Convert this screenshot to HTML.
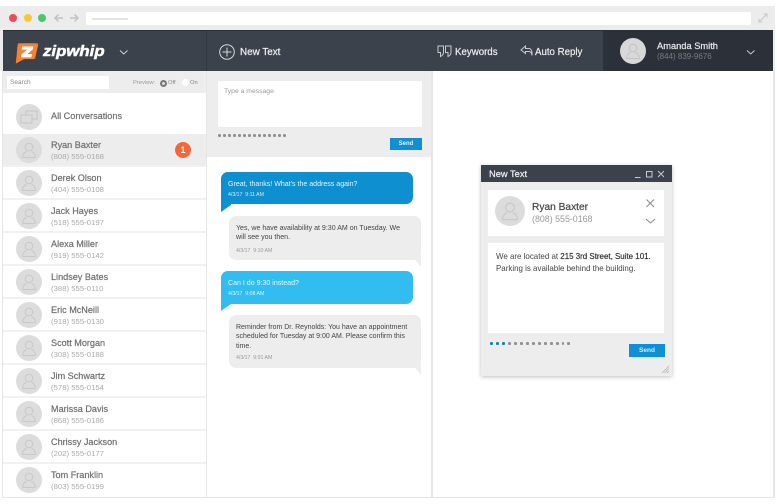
<!DOCTYPE html>
<html><head><meta charset="utf-8"><style>
html,body{margin:0;padding:0;background:#fff}
body{width:777px;height:504px;position:relative;overflow:hidden;font-family:"Liberation Sans",sans-serif;color:#666}
.a{position:absolute}
.t{position:absolute;white-space:nowrap}
.row{position:absolute;left:3px;width:203px;height:31px;background:#fff;border-bottom:2px solid #f1f1f1}
.av{position:absolute;left:13px;top:3px;width:26px;height:26px}
.n{position:absolute;left:48px;top:6px;font-size:9.100px;color:#6e6e6e;white-space:nowrap;-webkit-text-stroke:.2px #6e6e6e}
.p{position:absolute;left:48px;top:18px;font-size:7.750px;color:#aaa;white-space:nowrap}
.d{position:absolute;width:2.500px;height:2.500px;border-radius:50%;background:#8f8f8f}
.b{position:absolute;border-radius:7px}
</style></head><body>
<div class="a" style="left:0;top:6px;width:775px;height:65px;background:#ececec"></div>
<div class="a" style="left:2px;top:71px;width:773px;height:427px;background:#e6e6e6"></div>
<div class="a" style="left:9px;top:14px;width:8px;height:8px;border-radius:50%;background:#ee4a58"></div>
<div class="a" style="left:24px;top:14px;width:8px;height:8px;border-radius:50%;background:#f7c93a"></div>
<div class="a" style="left:38px;top:14px;width:8px;height:8px;border-radius:50%;background:#4cc66a"></div>
<svg class="a" style="left:52px;top:12px" width="30" height="12" fill="none" stroke="#c2c2c2" stroke-width="1.5"><path d="M11 6H3M6.500 2.500L3 6l3.500 3.500M18 6h8M22.500 2.500L26 6l-3.500 3.500"/></svg>
<div class="a" style="left:86px;top:12px;width:665px;height:13px;background:#fff;border-radius:2px"></div>
<div class="a" style="left:92px;top:18px;width:36px;height:1.500px;background:#e3e3e3"></div>
<svg class="a" style="left:758px;top:13px" width="10" height="10" fill="none" stroke="#c9c9c9" stroke-width="1"><path d="M1 9L9 1M5.500 1H9V4.500M1 5.500V9H4.500"/></svg>

<div class="a" style="left:3px;top:30px;width:770px;height:41px;background:#3c424c;border-top:1px solid #2a2e35;box-sizing:border-box"></div>
<div class="a" style="left:206px;top:31px;width:1px;height:40px;background:#33383f"></div>
<div class="a" style="left:603px;top:31px;width:170px;height:40px;background:#2b3039"></div>
<svg class="a" style="left:13.500px;top:40.500px" width="25.400" height="24.500" viewBox="0 0 28 25"><path d="M6 1.500H25q2 0 1.500 2.500L23.500 17q-.5 2-2.500 2H11L2 24 4 2.800Q4.500 1.500 6 1.500Z" fill="#f58233"/><path d="M9 5H21.500L20.500 8.500l-6 5H20L19 17H7.500L8.300 13.500 14.500 8.500H8.300Z" fill="#fff"/></svg>
<div class="t" style="left:43px;top:44px;font-size:15px;line-height:16px;font-weight:700;font-style:italic;color:#fff;-webkit-text-stroke:.5px #fff;transform:scaleX(1.12);transform-origin:left">zipwhip</div>
<svg class="a" style="left:119px;top:49px" width="10" height="7" fill="none" stroke="#d8d8d8" stroke-width="1"><path d="M1 1.500L4.700 5 8.500 1.500"/></svg>
<svg class="a" style="left:219px;top:44px" width="16" height="16" fill="none" stroke="#d6d8da" stroke-width="1"><circle cx="8" cy="8" r="7.300"/><path d="M8 3.500V12.500M3.500 8H12.500"/></svg>
<div class="t" style="left:240px;top:46.500px;font-size:9.900px;line-height:12px;color:#f2f2f2;-webkit-text-stroke:.2px #f2f2f2">New Text</div>
<svg class="a" style="left:437px;top:45px" width="15" height="13" fill="none" stroke="#c8cacc" stroke-width="1"><path d="M1 1H6.500V7.500Q6.500 10 3.500 11.500V7.500H1ZM8.500 1H14V7.500Q14 10 11 11.500V7.500H8.500Z"/></svg>
<div class="t" style="left:455px;top:46.500px;font-size:9.700px;line-height:12px;color:#eee;-webkit-text-stroke:.2px #eee">Keywords</div>
<svg class="a" style="left:520px;top:45px" width="13" height="12" fill="none" stroke="#c8cacc" stroke-width="1"><path d="M5.500 1L1 5 5.500 8.500V6.500H9Q11.500 6.500 12 10.500 12.500 3.800 9 3.500H5.500Z"/></svg>
<div class="t" style="left:535px;top:46.500px;font-size:9.700px;line-height:12px;color:#eee;-webkit-text-stroke:.2px #eee">Auto Reply</div>
<svg class="a" style="left:620px;top:38px" width="26" height="26"><circle cx="13" cy="13" r="13" fill="#d8d8d8"/><g fill="none" stroke="#c2c2c2" stroke-width="1"><circle cx="13" cy="10" r="3.800"/><path d="M6.500 20.500Q7 15.500 10.500 14.500M19.500 20.500Q19 15.500 15.500 14.500M6.500 20.500H19.500"/></g></svg>
<div class="t" style="left:657px;top:40px;font-size:9.300px;line-height:12px;color:#eaeaea;-webkit-text-stroke:.2px #eaeaea">Amanda Smith</div>
<div class="t" style="left:657px;top:51px;font-size:8px;line-height:11px;color:#777c84">(844) 839-9676</div>
<svg class="a" style="left:746px;top:49px" width="10" height="7" fill="none" stroke="#ccc" stroke-width="1"><path d="M1 1.500L4.700 5 8.500 1.500"/></svg>

<div class="a" style="left:3px;top:71px;width:203px;height:22px;background:#ededed"></div>
<div class="a" style="left:7px;top:76px;width:102px;height:13px;background:#fff"></div>
<div class="t" style="left:10px;top:78px;font-size:6.500px;line-height:9px;color:#888">Search</div>
<div class="t" style="left:133px;top:79px;font-size:5.800px;line-height:8px;color:#999">Preview:</div>
<div class="a" style="left:160px;top:80px;width:3px;height:3px;border:2px solid #777;border-radius:50%;background:#ddd"></div>
<div class="t" style="left:168px;top:79px;font-size:5.800px;line-height:8px;color:#888">Off</div>
<div class="a" style="left:182px;top:79px;width:7px;height:7px;border-radius:50%;background:#fff"></div>
<div class="t" style="left:190px;top:79px;font-size:5.800px;line-height:8px;color:#888">On</div>

<div class="a" style="left:3px;top:93px;width:203px;height:41px;background:#fff"></div>
<svg class="a" style="left:16px;top:104px" width="26" height="26"><circle cx="13" cy="13" r="13" fill="#dcdcdc"/><g fill="none" stroke="#c6c6c6" stroke-width="1"><rect x="10" y="7" width="11" height="8"/><rect x="5" y="11" width="11" height="8" fill="#dcdcdc"/></g></svg>
<div class="t" style="left:51px;top:110px;font-size:9.150px;line-height:12px;color:#6e6e6e;-webkit-text-stroke:.2px #6e6e6e">All Conversations</div>

<div class="row" style="top:134px;background:#ededed"><svg class="av"><use href="#u"/></svg><div class="n">Ryan Baxter</div><div class="p">(808) 555-0168</div></div>
<div class="row" style="top:167px"><svg class="av"><use href="#u"/></svg><div class="n">Derek Olson</div><div class="p">(404) 555-0108</div></div>
<div class="row" style="top:200px"><svg class="av"><use href="#u"/></svg><div class="n">Jack Hayes</div><div class="p">(518) 555-0197</div></div>
<div class="row" style="top:233px"><svg class="av"><use href="#u"/></svg><div class="n">Alexa Miller</div><div class="p">(919) 555-0142</div></div>
<div class="row" style="top:266px"><svg class="av"><use href="#u"/></svg><div class="n">Lindsey Bates</div><div class="p">(388) 555-0110</div></div>
<div class="row" style="top:299px"><svg class="av"><use href="#u"/></svg><div class="n">Eric McNeill</div><div class="p">(918) 555-0130</div></div>
<div class="row" style="top:332px"><svg class="av"><use href="#u"/></svg><div class="n">Scott Morgan</div><div class="p">(308) 555-0188</div></div>
<div class="row" style="top:365px"><svg class="av"><use href="#u"/></svg><div class="n">Jim Schwartz</div><div class="p">(578) 555-0154</div></div>
<div class="row" style="top:398px"><svg class="av"><use href="#u"/></svg><div class="n">Marissa Davis</div><div class="p">(868) 555-0186</div></div>
<div class="row" style="top:431px"><svg class="av"><use href="#u"/></svg><div class="n">Chrissy Jackson</div><div class="p">(202) 555-0177</div></div>
<div class="row" style="top:464px;height:33px;border:0"><svg class="av"><use href="#u"/></svg><div class="n">Tom Franklin</div><div class="p">(803) 555-0199</div></div>
<svg width="0" height="0" style="position:absolute"><defs><g id="u"><circle cx="13" cy="13" r="13" fill="#dcdcdc"/><g fill="none" stroke="#c8c8c8" stroke-width="1"><circle cx="13" cy="10" r="3.800"/><path d="M6.500 20.500Q7 15.500 10.500 14.500M19.500 20.500Q19 15.500 15.500 14.500M6.500 20.500H19.500"/></g></g></defs></svg>
<div class="a" style="left:175px;top:142px;width:16px;height:16px;border-radius:50%;background:#f2683a;color:#fff;font-size:9px;font-weight:700;line-height:16px;text-align:center">1</div>

<div class="a" style="left:207px;top:71px;width:224px;height:426px;background:#fff"></div>
<div class="a" style="left:207px;top:71px;width:224px;height:86px;background:#ededed"></div>
<div class="a" style="left:218px;top:81px;width:204px;height:46px;background:#fff"></div>
<div class="t" style="left:224px;top:87px;font-size:6.800px;line-height:10px;color:#999">Type a message</div>
<div class="d" style="left:218px;top:134px"></div><div class="d" style="left:223px;top:134px"></div><div class="d" style="left:228px;top:134px"></div><div class="d" style="left:233px;top:134px"></div><div class="d" style="left:238px;top:134px"></div><div class="d" style="left:243px;top:134px"></div><div class="d" style="left:248px;top:134px"></div><div class="d" style="left:253px;top:134px"></div><div class="d" style="left:258px;top:134px"></div><div class="d" style="left:263px;top:134px"></div><div class="d" style="left:268px;top:134px"></div><div class="d" style="left:273px;top:134px"></div><div class="d" style="left:278px;top:134px"></div><div class="d" style="left:283px;top:134px"></div>
<div class="a" style="left:390px;top:138px;width:32px;height:12px;background:#0e8fd6;color:#dff1fb;font-size:6px;font-weight:700;line-height:12px;text-align:center">Send</div>

<div class="b" style="left:221px;top:172px;width:192px;height:32px;background:#0e8fd0"></div>
<svg class="a" style="left:221px;top:198px" width="10" height="14"><path d="M0 0H10V7L0 14Z" fill="#0e8fd0"/></svg>
<div class="t" style="left:228px;top:180px;font-size:7.050px;line-height:10px;color:#e4f4fc">Great, thanks! What's the address again?</div>
<div class="t" style="left:228px;top:191px;font-size:5.200px;line-height:8px;color:#d5ecf8">4/3/17 &nbsp;9:11 AM</div>

<div class="b" style="left:229px;top:216px;width:192px;height:44px;background:#ededed"></div>
<svg class="a" style="left:412px;top:256px" width="9" height="11"><path d="M0 0H9V11Z" fill="#ededed"/></svg>
<div class="t" style="left:236px;top:224px;font-size:7.050px;line-height:9.300px;color:#444">Yes, we have availability at 9:30 AM on Tuesday. We<br>will see you then.</div>
<div class="t" style="left:236px;top:247px;font-size:5.200px;line-height:8px;color:#999">4/3/17 &nbsp;9:10 AM</div>

<div class="b" style="left:221px;top:271px;width:192px;height:33px;background:#32bdf0"></div>
<svg class="a" style="left:221px;top:297px" width="10" height="14"><path d="M0 0H10V7L0 14Z" fill="#32bdf0"/></svg>
<div class="t" style="left:228px;top:279px;font-size:7.050px;line-height:10px;color:#e6f7fd">Can I do 9:30 instead?</div>
<div class="t" style="left:228px;top:290px;font-size:5.200px;line-height:8px;color:#dff4fc">4/3/17 &nbsp;9:08 AM</div>

<div class="b" style="left:229px;top:315px;width:192px;height:53px;background:#ededed"></div>
<svg class="a" style="left:412px;top:364px" width="9" height="11"><path d="M0 0H9V11Z" fill="#ededed"/></svg>
<div class="t" style="left:236px;top:323px;font-size:7px;line-height:9.300px;color:#444">Reminder from Dr. Reynolds: You have an appointment<br>scheduled for Tuesday at 9:00 AM. Please confirm this<br>time.</div>
<div class="t" style="left:236px;top:354px;font-size:5.200px;line-height:8px;color:#999">4/3/17 &nbsp;9:01 AM</div>

<div class="a" style="left:433px;top:71px;width:340px;height:426px;background:#fff"></div>

<div class="a" style="left:481px;top:165px;width:191px;height:211px;background:#ededed;box-shadow:0 1px 4px rgba(0,0,0,.25)"></div>
<div class="a" style="left:481px;top:165px;width:191px;height:17px;background:#3c424c"></div>
<div class="t" style="left:489px;top:168px;font-size:9.300px;line-height:12px;color:#f2f2f2;-webkit-text-stroke:.2px #f2f2f2">New Text</div>
<svg class="a" style="left:634px;top:169px" width="30" height="10" fill="none" stroke="#c8cacc" stroke-width="1"><path d="M1 8.500H6.500M12.500 2.500H18V8H12.500ZM24 2L30 8M30 2L24 8"/></svg>
<div class="a" style="left:488px;top:190px;width:176px;height:46px;background:#fff"></div>
<svg class="a" style="left:495px;top:196px" width="30" height="30" viewBox="0 0 26 26"><use href="#u"/></svg>
<div class="t" style="left:532px;top:201px;font-size:10.200px;line-height:13px;color:#444;-webkit-text-stroke:.2px #444">Ryan Baxter</div>
<div class="t" style="left:532px;top:213px;font-size:8.850px;line-height:12px;color:#999">(808) 555-0168</div>
<svg class="a" style="left:645px;top:198px" width="11" height="30" fill="none" stroke="#888" stroke-width="1"><path d="M1.500 1.500L9 9M9 1.500L1.500 9M1 21L5.500 25 10 21"/></svg>
<div class="a" style="left:488px;top:243px;width:176px;height:90px;background:#fff"></div>
<div class="t" style="left:496px;top:251px;font-size:7.950px;line-height:11.700px;color:#444">We are located at <span style="color:#333;-webkit-text-stroke:.2px #333">215 3rd Street, Suite 101.</span><br>Parking is available behind the building.</div>
<div class="d" style="left:490px;top:342px;background:#0e7fc0"></div><div class="d" style="left:496px;top:342px;background:#0e7fc0"></div><div class="d" style="left:502px;top:342px;background:#0e7fc0"></div><div class="d" style="left:508px;top:342px"></div><div class="d" style="left:514px;top:342px"></div><div class="d" style="left:520px;top:342px"></div><div class="d" style="left:526px;top:342px"></div><div class="d" style="left:532px;top:342px"></div><div class="d" style="left:538px;top:342px"></div><div class="d" style="left:544px;top:342px"></div><div class="d" style="left:550px;top:342px"></div><div class="d" style="left:556px;top:342px"></div><div class="d" style="left:561.500px;top:342px"></div><div class="d" style="left:567px;top:342px"></div>
<div class="a" style="left:629px;top:344px;width:36px;height:13px;background:#0e8fd6;color:#d8eefa;font-size:6.500px;font-weight:700;line-height:13px;text-align:center">Send</div>
<svg class="a" style="left:661px;top:365px" width="9" height="9" fill="none" stroke="#b5b5b5" stroke-width=".8"><path d="M1 8L8 1M3.500 8L8 3.500M6 8L8 6"/></svg>
</body></html>
